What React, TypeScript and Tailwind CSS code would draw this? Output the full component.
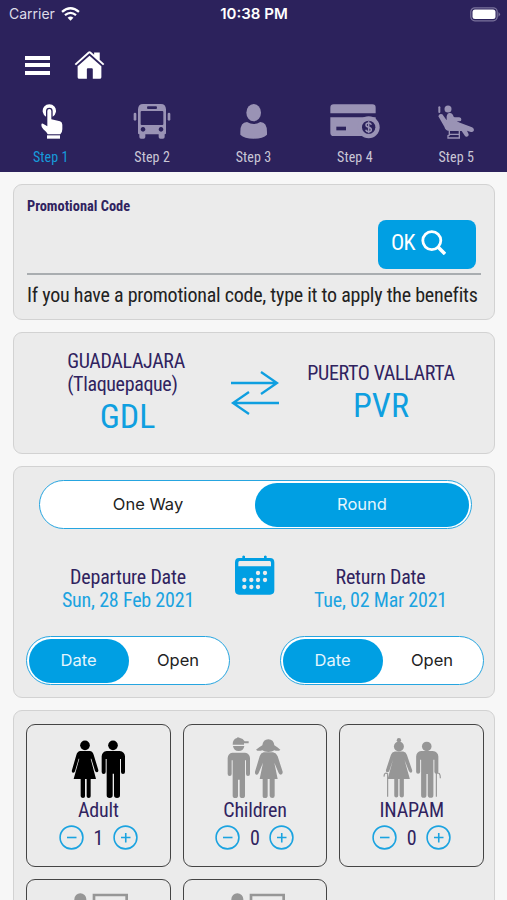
import type { ReactNode } from "react";
import clsx from "clsx";

const steps = [
  { label: "Step 1", icon: <TapIcon />, active: true },
  { label: "Step 2", icon: <BusIcon /> },
  { label: "Step 3", icon: <UserIcon /> },
  { label: "Step 4", icon: <CardIcon /> },
  { label: "Step 5", icon: <SeatIcon /> },
];

function TapIcon() {
  return (
    <svg viewBox="93 306 120 114" className="h-[38px] w-10" fill="#fff">
      <path d="M138 350a20 20 0 1 1 20 0v-17a10 10 0 0 0-20 0z" />
      <path d="M142 333a6 6 0 0 1 12 0v25l26 6q7 2 7 10v14q0 9-6 15h-38q-5-9-13-15-6-5-6-13 0-5 5-4l13 8z" />
      <path d="M141 406h39v10h-39z" />
    </svg>
  );
}

function BusIcon() {
  return (
    <svg viewBox="397 306 120 114" className="h-[38px] w-10" fill="#9a93b5">
      <path
        fillRule="evenodd"
        d="M430 312h54q14 0 15 16v72q0 3-4 3v8q0 5-5 5h-8q-5 0-5-5v-8h-40v8q0 5-5 5h-8q-5 0-5-5v-8q-4 0-4-3v-72q1-16 15-16zM445 319q-3 0-3 4t3 4h24q3 0 3-4t-3-4zM426 333q-3 0-3 3v36q0 3 3 3h62q3 0 3-3v-36q0-3-3-3zM430 381a7 7 0 1 0 .1 0zM484 381a7 7 0 1 0 .1 0z"
      />
      <rect x="402" y="338" width="8" height="24" rx="4" />
      <rect x="504" y="338" width="8" height="24" rx="4" />
    </svg>
  );
}

function UserIcon() {
  return (
    <svg viewBox="701 306 120 114" className="h-[38px] w-10" fill="#9a93b5">
      <ellipse cx="763" cy="338" rx="22" ry="26" />
      <path d="M743 366q20 12 40 0 20 0 20 30v8q-12 12-40 12t-40-12v-8q0-30 20-30z" />
    </svg>
  );
}

function CardIcon() {
  return (
    <svg viewBox="228 306 156 114" className="h-[38px] w-[52px]" fill="#9a93b5">
      <path d="M232 340v-17q0-10 10-10h116q10 0 10 10v17z" />
      <path d="M232 352h136v20a28 28 0 0 1-20 36H242q-10 0-10-10z" />
      <path d="M250 380h29v11h-29z" fill="#2c225c" />
      <circle cx="347" cy="382" r="33" />
      <circle cx="347" cy="382" r="20" fill="#2c225c" />
      <path
        d="M355 374q-2-5-8-5-8 0-8 6 0 5 8 7t8 7q0 6-8 6-7 0-9-6M347 364v36"
        fill="none"
        stroke="#9a93b5"
        strokeWidth="4.500"
      />
    </svg>
  );
}

function SeatIcon() {
  return (
    <svg viewBox="550 306 120 114" className="h-[38px] w-10" fill="#9a93b5">
      <circle cx="586" cy="327" r="10.500" />
      <path d="M560 322v14" fill="none" stroke="#9a93b5" strokeWidth="6" strokeLinecap="round" />
      <path d="M557 349q3-10 12-6l13 18v-12q2-11 10-10 8 1 11 11l3 2h14q7 1 6 7 0 5-6 5h-8l10 4 36 14q8 5 5 11-4 5-11 2l-9-3 5 11q1 6-5 7t-8-5l-8-12h-34q-14 1-18-13z" />
      <path d="M590 393v12l-4 2v7h34v-22M588 403h32" fill="none" stroke="#9a93b5" strokeWidth="4" />
    </svg>
  );
}

function HomeIcon() {
  return (
    <svg viewBox="220 150 94 90" className="h-[30px] w-[31px]" fill="#fff">
      <path d="M222 192l41-37q4-3 8 0l10 9v-7h17v22l14 13-4 4-41-37-41 37z" />
      <path d="M231 199l36-32 36 32v33q0 5-5 5h-21v-29q0-3-3-3h-12q-3 0-3 3v29h-23q-5 0-5-5z" />
    </svg>
  );
}

function AdultIcon() {
  return (
    <svg viewBox="209 95 174 189" className="h-[63px] w-[58px]" fill="#000">
      <circle cx="257" cy="123" r="14.500" />
      <path d="M243 140h28q9 1 12 11l14 46q1 6-4 7-4 0-6-5l-11-36h-2l16 61h-16v52q0 5-6 5t-6-5v-52h-5v52q0 5-6 5t-7-5v-52h-21l17-61h-2l-11 38q-2 5-6 4-5-1-3-8l13-45q3-11 12-12z" />
      <circle cx="341" cy="123" r="14.500" />
      <path d="M322 140h39q15 2 16 16v47q0 6-6 6t-6-6v-39h-3v109q0 8-9 8t-9-8v-65h-4v65q0 8-9 8t-9-8V164h-3v39q0 6-6 6t-6-6v-47q1-14 15-16z" />
    </svg>
  );
}

function ChildrenIcon() {
  return (
    <svg viewBox="675 95 180 189" className="h-[63px] w-[60px]" fill="#969696">
      <path d="M698 121q0-17 13-20 1-4 9 0 9 1 14 10h12v6h-14v4z" />
      <path d="M699 125h34q-2 15-17 15t-17-15z" />
      <path d="M697 145h38q14 2 15 16v48q0 6-6 6t-6-6v-41h-3v106q0 7-8 7t-8-7v-48h-5v48q0 7-8 7t-8-7V168h-3v41q0 6-6 6t-6-6v-48q1-14 14-16z" />
      <path d="M787 123q2-18 18-18t18 18q9 5 18 13-5 6-18 2-6 5-18 5t-18-5q-13 4-19-2 10-8 19-13z" />
      <path d="M791 144h28q10 2 14 12l15 46q1 7-5 9-5 0-7-5l-13-31 10 49h-9v50q0 7-7 7t-8-7v-50h-6v50q0 7-8 7t-7-7v-50h-9l10-49-13 31q-2 6-7 5-5-2-4-9l14-46q3-10 12-12z" />
    </svg>
  );
}

function SeniorIcon() {
  return (
    <svg viewBox="385 95 181 189" className="h-[63px] w-[60px]" fill="#969696">
      <circle cx="436" cy="107" r="6.500" />
      <circle cx="436" cy="126" r="15" />
      <path d="M424 141h25q8 1 11 10l16 47q1 6-4 7-3 0-6-5l-13-33 16 57h-18v50q0 6-6 6t-7-6v-50h-4v50q0 6-6 6t-6-6v-50h-20l16-57-11 33q-3 5-7 4t-3-7l15-46q3-9 12-10z" />
      <path d="M402 278v-70q-10-6-11 9" fill="none" stroke="#969696" strokeWidth="3.500" />
      <circle cx="520" cy="126" r="14.500" />
      <path d="M503 140h35q16 2 17 16v46q0 6-6 6t-6-6v-36h-3v107q0 8-8 8t-9-8v-64h-4v64q0 8-8 8t-8-8V166h-3v36q0 6-6 6t-6-6v-46q1-14 15-16z" />
      <path d="M549 278v-71q12-5 12 15" fill="none" stroke="#969696" strokeWidth="3.500" />
    </svg>
  );
}

function StudentIcon() {
  return (
    <svg viewBox="205 559 180 90" className="h-[30px] w-[60px]" fill="#969696">
      <circle cx="242" cy="581" r="18" />
      <path d="M283 650v-82h98v82" fill="none" stroke="#969696" strokeWidth="8" />
    </svg>
  );
}

function CalendarIcon() {
  return (
    <svg viewBox="705 273 120 120" className="size-10" fill="#009fe3">
      <path
        fillRule="evenodd"
        d="M717 282h10v-5q4-5 8 0v5h57v-5q4-5 8 0v5h10q13 0 13 13v84q0 13-13 13h-93q-12 0-12-13v-84q0-13 12-13zM719 291q-4 0-4 5v11h98v-11q0-5-4-5z"
      />
      <g fill="#ebebeb">
        <circle cx="774" cy="327" r="6.500" />
        <circle cx="795" cy="327" r="6.500" />
        {[733, 754, 774, 795].map((x) => (
          <circle key={x} cx={x} cy="348" r="6.500" />
        ))}
        {[733, 754, 774].map((x) => (
          <circle key={x} cx={x} cy="369" r="6.500" />
        ))}
      </g>
    </svg>
  );
}

function Card({ className, children }: { className?: string; children?: ReactNode }) {
  return (
    <section className={clsx("rounded-[9px] border border-[#d2d2d2] bg-[#ebebeb]", className)}>
      {children}
    </section>
  );
}

function DateToggle() {
  return (
    <div className="flex h-[49px] w-[204px] rounded-full border border-[#26a5e0] bg-white p-[1.500px] font-['Inter'] text-[16.500px]">
      <div className="flex w-[100px] items-center justify-center rounded-full bg-[#009fe3] text-[#e4f5fd]">Date</div>
      <div className="flex flex-1 items-center justify-center text-[#222]">Open</div>
    </div>
  );
}

function RoundButton({ plus }: { plus?: boolean }) {
  return (
    <svg viewBox="0 0 25 25" className="size-[25px]" fill="none" stroke="#1ba3e0" strokeWidth="1.600">
      <circle cx="12.500" cy="12.500" r="11.400" />
      <path d={plus ? "M8 12.500h9.500M12.750 8v9.500" : "M8 12.500h9.500"} />
    </svg>
  );
}

function Passenger({ label, count, icon }: { label: string; count: number; icon: ReactNode }) {
  return (
    <div className="flex h-[143px] flex-col items-center rounded-[9px] border border-[#444] pt-[11px]">
      {icon}
      <span className="-mt-px text-xl leading-6 tracking-[-0.2px]">{label}</span>
      <div className="mt-[3px] flex w-[79px] items-center justify-between">
        <RoundButton />
        <span className="text-xl leading-6">{count}</span>
        <RoundButton plus />
      </div>
    </div>
  );
}

export default function App() {
  return (
    <div className="h-[900px] w-full overflow-hidden bg-[#f7f7f7] font-['Roboto',sans-serif] text-[#30235f] font-stretch-75%">
      <header className="h-[172px] bg-[#2c225c]">
        <div className="grid h-7 grid-cols-[1fr_auto_1fr] items-center pr-[6px] pl-[7px] font-['Inter',sans-serif] text-sm text-white">
          <div className="flex items-center gap-[6px] pl-[2px] text-[#dedce8]">
            Carrier
            <svg viewBox="184 17 58 43" className="h-[14px] w-[19px]" fill="none" stroke="#fff" strokeWidth="7">
              <path d="M187 32q26-22 52 0M196 42q17-14 34 0" />
              <path d="M204 50q9-7 18 0l-9 9z" fill="#fff" stroke="none" />
            </svg>
          </div>
          <div className="text-center text-[15px] font-semibold">10:38 PM</div>
          <svg viewBox="0 0 31 15" className="h-[15px] w-[31px] justify-self-end">
            <rect x=".8" y=".8" width="26.400" height="13" rx="4" fill="none" stroke="#7a739c" strokeWidth="1.200" />
            <rect x="2.500" y="2.500" width="23" height="9.600" rx="2.500" fill="#fff" />
            <path d="M28.500 5q3 2.300 0 4.700z" fill="#7a739c" />
          </svg>
        </div>
        <div className="flex h-[74px] items-center gap-[23.500px] pl-[25px]">
          <div className="flex w-[25px] flex-col gap-[3.500px]">
            <span className="h-1 bg-white" />
            <span className="h-1 bg-white" />
            <span className="h-1 bg-white" />
          </div>
          <HomeIcon />
        </div>
        <nav className="grid grid-cols-5">
          {steps.map((step) => (
            <div key={step.label} className="flex flex-col items-center gap-[7px]">
              {step.icon}
              <span
                className={clsx("text-sm tracking-[0.1px]", step.active ? "text-[#169bdb]" : "text-[#cac7d6]")}
              >
                {step.label}
              </span>
            </div>
          ))}
        </nav>
      </header>

      <main className="flex flex-col gap-3 pt-3 pr-3 pl-[13px]">
        <Card className="h-[136px] px-[13px]">
          <div className="pt-3 text-[14.400px] leading-5 font-bold">Promotional Code</div>
          <div className="flex h-[58px] items-start justify-end border-b-2 border-[#a9adb0] pt-[3px] pr-[5px]">
            <button className="flex h-[49px] w-[98px] items-center gap-[6px] rounded-lg bg-[#009fe3] pb-[5px] pl-[13px] text-[22px] tracking-[-0.6px] text-white">
              OK
              <svg viewBox="0 0 25 25" className="size-[25px]" fill="none" stroke="#fff" strokeWidth="2.800">
                <circle cx="10.800" cy="10.600" r="9" />
                <path d="M17 17l7 7" strokeWidth="3.500" />
              </svg>
            </button>
          </div>
          <p className="mt-[6px] text-xl tracking-[-0.24px] whitespace-nowrap text-[#222]">
            If you have a promotional code, type it to apply the benefits
          </p>
        </Card>

        <Card className="grid h-[122px] grid-cols-[1fr_50px_1fr] items-center">
          <div className="flex flex-col items-center pl-3">
            <div className="-ml-[3px] text-xl leading-[23px] tracking-[-0.35px]">
              GUADALAJARA
              <br />
              (Tlaquepaque)
            </div>
            <div className="text-[34px] leading-10 text-[#0f9fe0]">GDL</div>
          </div>
          <svg viewBox="0 0 50 46" className="h-[46px] w-[50px]" fill="none" stroke="#0f9fe0" strokeWidth="2.300">
            <path d="M2 13h46M32 2l16 11-16 11M50 33H4M20 22L4 33l16 11" />
          </svg>
          <div className="flex flex-col items-center pr-[11px]">
            <div className="text-xl leading-[23px] tracking-[-0.35px]">PUERTO VALLARTA</div>
            <div className="text-[34px] leading-10 text-[#0f9fe0]">PVR</div>
          </div>
        </Card>

        <Card className="h-[232px] pt-[13px] pr-[10px] pl-3">
          <div className="mx-auto flex h-[49px] w-[433px] rounded-full border border-[#26a5e0] bg-white p-[1.500px] font-['Inter'] text-[16.500px]">
            <div className="flex flex-1 items-center justify-center text-[#222]">One Way</div>
            <div className="flex w-[214px] items-center justify-center rounded-full bg-[#009fe3] text-[#e4f5fd]">Round</div>
          </div>
          <div className="mt-[26px] grid h-[60px] grid-cols-[1fr_40px_1fr] text-center text-xl leading-6 tracking-[-0.2px]">
            <div className="pt-[10px] pr-[5px]">
              Departure Date
              <div className="-mt-px text-[#1ba3e0]">Sun, 28 Feb 2021</div>
            </div>
            <CalendarIcon />
            <div className="pt-[10px] pl-[2px]">
              Return Date
              <div className="-mt-px text-[#1ba3e0]">Tue, 02 Mar 2021</div>
            </div>
          </div>
          <div className="mt-[21px] flex justify-between">
            <DateToggle />
            <DateToggle />
          </div>
        </Card>

        <Card className="h-[320px] pt-[13px] pr-[10px] pl-3">
          <div className="grid grid-cols-3 gap-3">
            <Passenger label="Adult" count={1} icon={<AdultIcon />} />
            <Passenger label="Children" count={0} icon={<ChildrenIcon />} />
            <Passenger label="INAPAM" count={0} icon={<SeniorIcon />} />
            <div className="flex h-[143px] justify-center rounded-[9px] border border-[#444] pt-3">
              <StudentIcon />
            </div>
            <div className="flex h-[143px] justify-center rounded-[9px] border border-[#444] pt-3">
              <StudentIcon />
            </div>
          </div>
        </Card>
      </main>
    </div>
  );
}
